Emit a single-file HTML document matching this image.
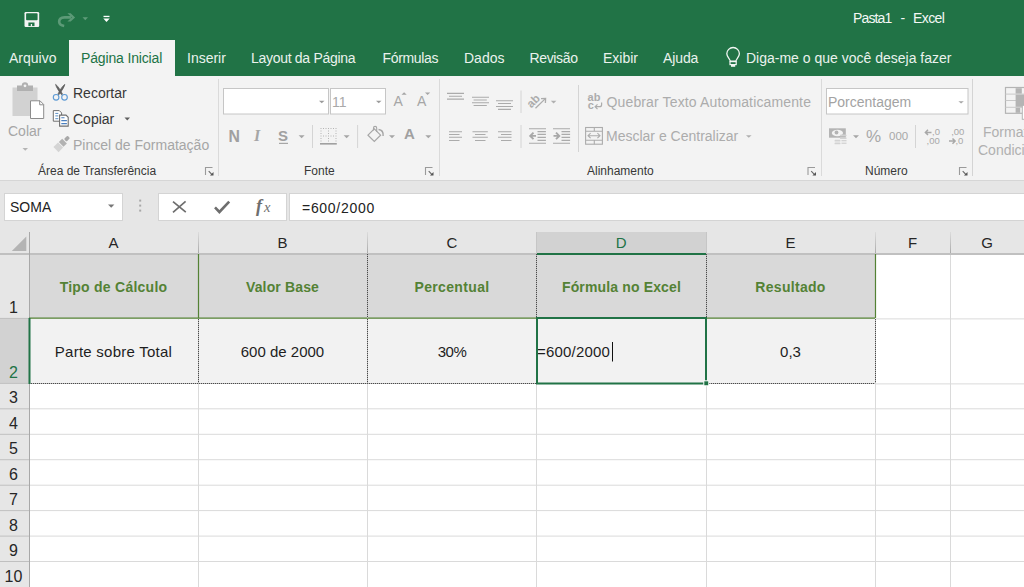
<!DOCTYPE html>
<html><head><meta charset="utf-8">
<style>
*{box-sizing:border-box;margin:0;padding:0}
html,body{width:1024px;height:587px;overflow:hidden;background:#fff;font-family:"Liberation Sans",sans-serif;}
.a{position:absolute;white-space:pre;line-height:1}
#title{position:absolute;left:0;top:0;width:1024px;height:76px;background:#217346}
.tab{position:absolute;top:50px;font-size:14px;color:#eaf2ed}
#acttab{position:absolute;left:69px;top:40px;width:106px;height:36px;background:#f3f3f3}
#ribbon{position:absolute;left:0;top:76px;width:1024px;height:105px;background:#f3f3f3;border-bottom:1px solid #d6d6d6}
.rt{position:absolute;font-size:14px;color:#383838;white-space:pre;line-height:1}
.dis{color:#a6a6a6}
.gl{position:absolute;font-size:12px;color:#383838;white-space:pre;line-height:1}
.sep{position:absolute;width:1px;background:#d4d4d4}
#fbar{position:absolute;left:0;top:181px;width:1024px;height:51px;background:#e6e6e6}
.box{position:absolute;background:#fff;border:1px solid #d4d4d4}
</style></head><body>
<div id="title">
<svg class="a" style="left:0;top:0" width="130" height="40" viewBox="0 0 130 40">
 <rect x="24.5" y="12.1" width="14.7" height="14.9" rx="1.2" fill="#f4f4f4"/>
 <rect x="26.1" y="13.3" width="11.5" height="7" rx=".8" fill="#217346"/>
 <rect x="28.4" y="22.5" width="6.1" height="3.6" fill="#217346"/>
 <rect x="30.8" y="24" width="1.3" height="2.1" fill="#f4f4f4"/>
 <path d="M71 17.4h-6.4c-4.2 0-5.6 2.2-5.4 4.6c.2 2 1.8 3.4 5 4" fill="none" stroke="#5c9a77" stroke-width="2.7"/>
 <path d="M67.4 13.2h3.3l4.4 4.2l-4.4 4.2h-3.3l4.4-4.2z" fill="#5c9a77"/>
 <path d="M82.5 17.2h5.5l-2.75 3z" fill="#5f9c7a"/>
 <rect x="103.5" y="15.8" width="6" height="1.3" fill="#fff"/>
 <path d="M103.3 18.4h6.4l-3.2 3.6z" fill="#fff"/>
</svg>
<span class="a" style="left:853px;top:11px;font-size:14px;color:#f4f8f5;letter-spacing:-.85px">Pasta1</span><span class="a" style="left:900.5px;top:11px;font-size:14px;color:#f4f8f5">-</span><span class="a" style="left:913px;top:11px;font-size:14px;color:#f4f8f5;letter-spacing:-.6px">Excel</span>
<span class="tab" style="left:9px">Arquivo</span>
<span class="tab" style="left:187px">Inserir</span>
<span class="tab" style="left:251px;letter-spacing:-.3px">Layout da Página</span>
<span class="tab" style="left:382.5px;letter-spacing:-.35px">Fórmulas</span>
<span class="tab" style="left:464px">Dados</span>
<span class="tab" style="left:529.5px;letter-spacing:-.35px">Revisão</span>
<span class="tab" style="left:603px">Exibir</span>
<span class="tab" style="left:663px;letter-spacing:-.1px">Ajuda</span>
<svg class="a" style="left:720px;top:44px" width="26" height="26" viewBox="720 44 26 26">
 <path d="M730.3 61.2c0-2-3.5-4.3-3.5-7.4a6.3 6.3 0 0 1 12.6 0c0 3.1-3.5 5.4-3.5 7.4z" fill="none" stroke="#f1f6f3" stroke-width="1.3"/>
 <rect x="730" y="61.6" width="6.2" height="3" fill="none" stroke="#f1f6f3" stroke-width="1.2"/>
 <rect x="731" y="65" width="4.2" height="1.8" fill="#f1f6f3"/>
</svg>
<span class="tab" style="left:746px">Diga-me o que você deseja fazer</span>
</div>
<div id="acttab"><span class="a" style="left:12px;top:11px;font-size:14px;color:#217346;letter-spacing:-.15px">Página Inicial</span></div>
<div id="ribbon"></div>
<svg class="a" style="left:0;top:76px" width="1024" height="105" viewBox="0 76 1024 105">
 <!-- clipboard group -->
 <rect x="12.5" y="87.5" width="25" height="28.5" fill="#d2d2d2"/>
 <path d="M17 85.5h4.8a3.2 3.2 0 0 1 6.4 0h4.8v5.5h-16z" fill="#b0b0b0"/>
 <circle cx="25" cy="85.8" r="1.4" fill="#f3f3f3"/>
 <path d="M30.5 100.8h9.5l3.7 3.7v14h-13.2z" fill="#fff" stroke="#8c8c8c" stroke-width="1"/>
 <path d="M39.7 100.8v4h4" fill="none" stroke="#8c8c8c" stroke-width="1"/>
 <path d="M22.5 148h5.5l-2.75 2.8z" fill="#b4b4b4"/>
 <path d="M55.6 84.4c.6 2.8 3 6.2 6 10.4l.9-.6c-2.2-4-3.8-7.6-6.9-9.8z" fill="#606060" stroke="#606060" stroke-width=".8"/>
 <path d="M64.8 84.4c-.6 2.8-3 6.2-6 10.4l-.9-.6c2.2-4 3.8-7.6 6.9-9.8z" fill="#606060" stroke="#606060" stroke-width=".8"/>
 <circle cx="56.1" cy="97.3" r="2.8" fill="none" stroke="#5d9ad4" stroke-width="1.15"/>
 <circle cx="64.5" cy="97.3" r="2.8" fill="none" stroke="#5d9ad4" stroke-width="1.15"/>
 <path d="M53.3 110.6h6l2.3 2.3v8.3h-8.3z" fill="#fff" stroke="#6e6e6e" stroke-width="1"/>
 <path d="M55.3 113.4h3M55.3 115.9h3M55.3 118.7h3" stroke="#5a8fc4" stroke-width="1"/>
 <path d="M59.6 115.1h6.4l2.2 2.2v8.8h-8.6z" fill="#fff" stroke="#6e6e6e" stroke-width="1.1"/>
 <path d="M61.3 117.8h3.2M61.3 120.6h5.6M61.3 123.6h5.6" stroke="#4a7fbf" stroke-width="1.1"/>
 <path d="M124.5 117.6h5.5l-2.75 2.8z" fill="#5e5e5e"/>
 <g transform="translate(62 143.6) rotate(-45)">
  <path d="M-8.5 -3.6h6.5v7.2h-6.5z" fill="#d4d4d4"/>
  <rect x="-1.2" y="-3.3" width="4.8" height="6.6" fill="#b2b2b2"/>
  <rect x="4.6" y="-1.8" width="5" height="3.6" rx="1" fill="#a8a8a8"/>
 </g>
 <path d="M218.5 79v97" stroke="#dadada" stroke-width="1"/>
 <path d="M205.5 175v-7.5h7" fill="none" stroke="#9a9a9a" stroke-width="1.1"/>
 <path d="M208.7 171.2l3.6 3.6" stroke="#666" stroke-width="1.1"/>
 <path d="M213.5 172v3.6h-3.6z" fill="#555"/>
 <!-- font group -->
 <rect x="223.5" y="88.5" width="105" height="25.5" fill="#fff" stroke="#c6c6c6"/>
 <rect x="330.5" y="88.5" width="55" height="25.5" fill="#fff" stroke="#c6c6c6"/>
 <path d="M319 100.8h5.5l-2.75 2.4z" fill="#9a9a9a"/>
 <path d="M376 100.8h5.5l-2.75 2.4z" fill="#9a9a9a"/>
 <path d="M401.5 94.8l2.6-2.6l2.6 2.6z" fill="#a6a6a6"/>
 <path d="M425 92.5h5.2l-2.6 2.6z" fill="#a6a6a6"/>
 <path d="M279 143.4h9" stroke="#a6a6a6" stroke-width="1.2"/>
 <path d="M298.6 135.2h6l-3 3z" fill="#a6a6a6"/>
 <path d="M312.5 125v23" stroke="#d4d4d4"/>
 <g fill="#b4b4b4">
  <path d="M320.5 128h1v1h-1zM323 128h1v1h-1zM325.5 128h1v1h-1zM328 128h1v1h-1zM330.5 128h1v1h-1zM333 128h1v1h-1zM335.5 128h1v1h-1z"/>
  <path d="M320.5 135.5h1v1h-1zM323 135.5h1v1h-1zM325.5 135.5h1v1h-1zM328 135.5h1v1h-1zM330.5 135.5h1v1h-1zM333 135.5h1v1h-1zM335.5 135.5h1v1h-1z"/>
  <path d="M320.5 130.5h1v1h-1zM320.5 133h1v1h-1zM320.5 138h1v1h-1zM320.5 140.5h1v1h-1z"/>
  <path d="M328 130.5h1v1h-1zM328 133h1v1h-1zM328 138h1v1h-1zM328 140.5h1v1h-1z"/>
  <path d="M335.5 130.5h1v1h-1zM335.5 133h1v1h-1zM335.5 138h1v1h-1zM335.5 140.5h1v1h-1z"/>
 </g>
 <rect x="320" y="143" width="16.8" height="1.6" fill="#a0a0a0"/>
 <path d="M343.6 135.2h6l-3 3z" fill="#a6a6a6"/>
 <path d="M357.6 125v23" stroke="#d4d4d4"/>
 <path d="M368 135.2l6.3-6.3l6.3 6.3l-6.3 6.3z" fill="none" stroke="#a6a6a6" stroke-width="1.2"/>
 <path d="M373.5 130.5v-2.5a1.6 1.6 0 0 1 3.2 0v4" fill="none" stroke="#a6a6a6" stroke-width="1.1"/>
 <path d="M378.5 129.5c3 .3 5 2.5 4.6 6.5" fill="none" stroke="#a6a6a6" stroke-width="1.4"/>
 <path d="M389 135.2h6l-3 3z" fill="#a6a6a6"/>
 <path d="M425.3 135.2h6l-3 3z" fill="#a6a6a6"/>
 <path d="M439.5 79v97" stroke="#dadada" stroke-width="1"/>
 <path d="M425.5 175v-7.5h7" fill="none" stroke="#9a9a9a" stroke-width="1.1"/>
 <path d="M428.7 171.2l3.6 3.6" stroke="#666" stroke-width="1.1"/>
 <path d="M433.5 172v3.6h-3.6z" fill="#555"/>
 <!-- alignment group -->
 <g stroke="#ababab" stroke-width="1.1">
  <path d="M447 93.4h17M449 96.3h13M447 99.1h17"/>
  <path d="M472 97.3h17M473.6 100h13.2M472 102.8h17M473.6 105.5h13.2"/>
  <path d="M496 100.8h17M498 103.5h13M496 106.5h17M498 109.4h13"/>
  <path d="M449 131.7h13M449 134.5h10.5M449 137.3h13M449 140.5h10.5"/>
  <path d="M472.5 131.7h15.3M475 134.5h10.5M472.5 137.3h15.3M475 140.5h10.5"/>
  <path d="M498 131.7h13.5M501 134.5h10.5M498 137.3h13.5M501 140.5h10.5"/>
  <path d="M529 128.8h17M537.5 131.6h8.4M537.5 134.4h8.4M537.5 137.4h8.4M537.5 140.4h8.4M529 143.2h17"/>
  <path d="M553 128.8h17M561.5 131.6h8.6M561.5 134.4h8.6M561.5 137.4h8.6M561.5 140.4h8.6M553 143.2h17"/>
 </g>
 <path d="M536 135.9h-5.5M533.5 132.6l-3.3 3.3l3.3 3.3" fill="none" stroke="#a8a8a8" stroke-width="1.9"/>
 <path d="M553.5 135.9h5.5M556 132.6l3.3 3.3l-3.3 3.3" fill="none" stroke="#a8a8a8" stroke-width="1.9"/>
 <path d="M521 90.5v22.5M521 125v23M578.5 85v67" stroke="#d4d4d4"/>
 <text transform="translate(536 103.8) rotate(-45)" font-family="Liberation Sans" font-size="11.5" font-weight="bold" fill="#acacac" text-anchor="middle">ab</text>
 <path d="M535.5 108.3l9.6-9.4" stroke="#acacac" stroke-width="1.3"/>
 <path d="M541 98.6l4.6-.2l-.2 4.6" fill="none" stroke="#acacac" stroke-width="1.3"/>
 <path d="M550.8 100.8h5.6l-2.8 2.6z" fill="#b0b0b0"/>
 <text x="587.6" y="101.3" font-family="Liberation Sans" font-size="11" font-weight="bold" fill="#acacac">ab</text>
 <text x="587.8" y="108.8" font-family="Liberation Sans" font-size="11" font-weight="bold" fill="#acacac">c</text>
 <path d="M601.6 102.5v2.2a2 2 0 0 1-2 2h-4.4M597.5 104.3l-2.4 2.4l2.4 2.4" fill="none" stroke="#acacac" stroke-width="1.2"/>
 <rect x="585.6" y="127.5" width="16.8" height="16.7" fill="none" stroke="#acacac" stroke-width="1.1"/>
 <path d="M585.6 131.2h16.8M585.6 140.3h16.8M594.3 127.5v3.7M594.3 140.3v3.9" stroke="#acacac" stroke-width="1.1"/>
 <path d="M588 135.7h12M590.6 133.2l-2.6 2.5l2.6 2.5M597.4 133.2l2.6 2.5l-2.6 2.5" fill="none" stroke="#acacac" stroke-width="1.1"/>
 <path d="M746 135.2h5.6l-2.8 2.6z" fill="#b0b0b0"/>
 <path d="M821.5 79v97" stroke="#dadada" stroke-width="1"/>
 <path d="M808.0 175v-7.5h7" fill="none" stroke="#9a9a9a" stroke-width="1.1"/>
 <path d="M811.2 171.2l3.6 3.6" stroke="#666" stroke-width="1.1"/>
 <path d="M816.0 172v3.6h-3.6z" fill="#555"/>
 <!-- number group -->
 <rect x="826.5" y="88.5" width="141.5" height="25.5" fill="#fff" stroke="#c6c6c6"/>
 <path d="M958.4 101.2h5.4l-2.7 2.4z" fill="#a6a6a6"/>
 <rect x="829" y="128.3" width="16.8" height="9.4" fill="#b4b4b4"/>
 <ellipse cx="837.4" cy="133" rx="5.6" ry="3.2" fill="#f3f3f3"/>
 <circle cx="836.5" cy="132.5" r="1.9" fill="#b4b4b4"/>
 <g fill="#d2d2d2">
  <rect x="840" y="134.5" width="6.6" height="1.8" rx=".9"/>
  <rect x="840" y="137.3" width="6.6" height="1.8" rx=".9"/>
  <rect x="834.5" y="139.8" width="6" height="1.8" rx=".9"/>
  <rect x="834.5" y="142.5" width="6" height="1.8" rx=".9"/>
  <rect x="841.5" y="140" width="5" height="1.3"/>
  <rect x="841.5" y="142.6" width="5" height="1.3"/>
 </g>
 <path d="M853 135.2h6l-3 3z" fill="#a6a6a6"/>
 <path d="M915.5 125v23M972.5 79v97" stroke="#d4d4d4"/>
 <text x="932" y="135.3" font-family="Liberation Sans" font-size="9.5" fill="#a8a8a8">,0</text>
 <text x="926.5" y="143.8" font-family="Liberation Sans" font-size="9.5" fill="#a8a8a8">,00</text>
 <path d="M931.5 132.4h-6M928 129.8l-2.6 2.6l2.6 2.6" fill="none" stroke="#a8a8a8" stroke-width="1.5"/>
 <text x="951.2" y="135.3" font-family="Liberation Sans" font-size="9.5" fill="#a8a8a8">,00</text>
 <text x="955.4" y="143.8" font-family="Liberation Sans" font-size="9.5" fill="#a8a8a8">,0</text>
 <path d="M949 141.1h6M952.5 138.5l2.6 2.6l-2.6 2.6" fill="none" stroke="#a8a8a8" stroke-width="1.5"/>
 <path d="M959.5 175v-7.5h7" fill="none" stroke="#9a9a9a" stroke-width="1.1"/>
 <path d="M962.7 171.2l3.6 3.6" stroke="#666" stroke-width="1.1"/>
 <path d="M967.5 172v3.6h-3.6z" fill="#555"/>
 <rect x="1005.5" y="87.5" width="22" height="25.8" fill="none" stroke="#b4b4b4" stroke-width="1.2"/>
 <path d="M1005.5 94.1h20M1005.5 100.5h20M1005.5 107.3h20" stroke="#c8c8c8" stroke-width="1"/>
 <rect x="1015.6" y="88.2" width="6.2" height="5.4" fill="#b4b4b4"/>
 <rect x="1015.6" y="94.6" width="9" height="12.2" fill="#b4b4b4"/>
 <rect x="1015.6" y="107.8" width="4.6" height="5" fill="#b4b4b4"/>
 <rect x="1022.3" y="105.3" width="4" height="14" fill="#fff" stroke="#b4b4b4" stroke-width="1"/>
</svg>
<span class="rt dis" style="left:8px;top:124px">Colar</span>
<span class="rt" style="left:73px;top:86px">Recortar</span>
<span class="rt" style="left:73px;top:112px">Copiar</span>
<span class="rt dis" style="left:73px;top:138px">Pincel de Formatação</span>
<span class="gl" style="left:38px;top:165px">Área de Transferência</span>
<span class="rt" style="left:332px;top:95px;color:#a9a9a9">11</span>
<span class="rt" style="left:393.5px;top:94px;color:#a6a6a6;font-size:14px">A</span>
<span class="rt" style="left:417px;top:94px;color:#a6a6a6;font-size:14px">A</span>
<span class="rt" style="left:228.5px;top:129px;color:#a0a0a0;font-size:15.8px;font-weight:bold">N</span>
<span class="a" style="left:254px;top:128px;color:#a6a6a6;font-size:16px;font-weight:bold;font-style:italic;font-family:'Liberation Serif',serif">I</span>
<span class="rt" style="left:278px;top:128px;color:#a0a0a0;font-size:15px;font-weight:bold">S</span>
<span class="rt" style="left:404px;top:126px;color:#a0a0a0;font-size:15px;font-weight:bold">A</span>
<span class="gl" style="left:304px;top:165px">Fonte</span>
<span class="rt dis" style="left:606.5px;top:95px;color:#acacac;letter-spacing:.14px">Quebrar Texto Automaticamente</span>
<span class="rt dis" style="left:606px;top:129px;color:#acacac">Mesclar e Centralizar</span>
<span class="gl" style="left:587px;top:165px">Alinhamento</span>
<span class="rt" style="left:828px;top:95px;color:#a3a3a3">Porcentagem</span>
<span class="a" style="left:866px;top:128px;font-size:17px;color:#a8a8a8">%</span>
<span class="a" style="left:889px;top:131px;font-size:11.5px;color:#a8a8a8">000</span>
<span class="gl" style="left:865px;top:165px">Número</span>
<span class="rt dis" style="left:983px;top:125px;color:#b0b0b0">Formatação</span>
<span class="rt dis" style="left:978px;top:143px;color:#b0b0b0">Condicional</span>
<div id="fbar"></div>
<div class="box" style="left:4px;top:193px;width:119px;height:28px"></div>
<span class="a" style="left:10px;top:200px;font-size:14px;color:#222">SOMA</span>
<div class="box" style="left:158px;top:193px;width:129px;height:28px"></div>
<div class="box" style="left:289px;top:193px;width:740px;height:28px"></div>
<span class="a" style="left:302px;top:201px;font-size:14px;color:#222;letter-spacing:.7px">=600/2000</span>
<svg class="a" style="left:0;top:181px" width="1024" height="406" viewBox="0 181 1024 406">
 <path d="M108 204.6h6.4l-3.2 3.2z" fill="#777"/>
 <g fill="#a8a8a8"><rect x="139.2" y="199.6" width="2" height="2"/><rect x="139.2" y="204.6" width="2" height="2"/><rect x="139.2" y="209.6" width="2" height="2"/></g>
 <path d="M173 201.6l12.8 10.6M185.6 201.4l-12.6 11" stroke="#6e6e6e" stroke-width="1.7"/>
 <path d="M215 207.4l4.4 4.6l9.8-10.4" fill="none" stroke="#6e6e6e" stroke-width="2.6" stroke-linejoin="miter"/>
 <text x="256" y="211.5" font-family="Liberation Serif" font-style="italic" font-weight="bold" font-size="18" fill="#6e6e6e">f</text>
 <text x="264" y="211.5" font-family="Liberation Serif" font-style="italic" font-size="14.5" fill="#6e6e6e">x</text>
</svg>
<div class="a" style="left:0;top:232px;width:1024px;height:22px;background:#e6e6e6"></div>
<div class="a" style="left:537px;top:232px;width:169px;height:22px;background:#d2d2d2"></div>
<div class="a" style="left:0;top:254px;width:29px;height:333px;background:#e6e6e6"></div>
<div class="a" style="left:0;top:318px;width:29px;height:65px;background:#d2d2d2"></div>
<div class="a" style="left:29px;top:254px;width:846px;height:64px;background:#d9d9d9"></div>
<div class="a" style="left:29px;top:318px;width:846px;height:65px;background:#f2f2f2"></div>
<div class="a" style="left:29px;top:235px;width:169px;text-align:center;font-size:15px;color:#262626">A</div>
<div class="a" style="left:198px;top:235px;width:169px;text-align:center;font-size:15px;color:#262626">B</div>
<div class="a" style="left:367px;top:235px;width:169.60000000000002px;text-align:center;font-size:15px;color:#262626">C</div>
<div class="a" style="left:536.6px;top:235px;width:169.39999999999998px;text-align:center;font-size:15px;color:#217346">D</div>
<div class="a" style="left:706px;top:235px;width:169px;text-align:center;font-size:15px;color:#262626">E</div>
<div class="a" style="left:875px;top:235px;width:75px;text-align:center;font-size:15px;color:#262626">F</div>
<div class="a" style="left:950px;top:235px;width:74px;text-align:center;font-size:15px;color:#262626">G</div>
<div class="a" style="left:0;top:300.0px;width:27px;text-align:center;font-size:16px;color:#262626">1</div>
<div class="a" style="left:0;top:365.0px;width:27px;text-align:center;font-size:16px;color:#217346">2</div>
<div class="a" style="left:0;top:390.4px;width:27px;text-align:center;font-size:16px;color:#262626">3</div>
<div class="a" style="left:0;top:415.9px;width:27px;text-align:center;font-size:16px;color:#262626">4</div>
<div class="a" style="left:0;top:441.3px;width:27px;text-align:center;font-size:16px;color:#262626">5</div>
<div class="a" style="left:0;top:466.8px;width:27px;text-align:center;font-size:16px;color:#262626">6</div>
<div class="a" style="left:0;top:492.2px;width:27px;text-align:center;font-size:16px;color:#262626">7</div>
<div class="a" style="left:0;top:517.7px;width:27px;text-align:center;font-size:16px;color:#262626">8</div>
<div class="a" style="left:0;top:543.1px;width:27px;text-align:center;font-size:16px;color:#262626">9</div>
<div class="a" style="left:0;top:568.6px;width:27px;text-align:center;font-size:16px;color:#262626">10</div>
<div class="a" style="left:29px;top:280px;width:169px;text-align:center;font-size:14px;font-weight:bold;color:#548235;letter-spacing:.25px">Tipo de Cálculo</div>
<div class="a" style="left:198px;top:280px;width:169px;text-align:center;font-size:14px;font-weight:bold;color:#548235;letter-spacing:.15px">Valor Base</div>
<div class="a" style="left:367px;top:280px;width:170px;text-align:center;font-size:14px;font-weight:bold;color:#548235;letter-spacing:.35px">Percentual</div>
<div class="a" style="left:537px;top:280px;width:169px;text-align:center;font-size:14px;font-weight:bold;color:#548235;letter-spacing:.15px">Fórmula no Excel</div>
<div class="a" style="left:706px;top:280px;width:169px;text-align:center;font-size:14px;font-weight:bold;color:#548235;letter-spacing:.3px">Resultado</div>
<div class="a" style="left:29px;top:344px;width:169px;text-align:center;font-size:15px;color:#1e1e1e;letter-spacing:.25px">Parte sobre Total</div>
<div class="a" style="left:198px;top:344px;width:169px;text-align:center;font-size:15px;color:#1e1e1e;letter-spacing:0px">600 de 2000</div>
<div class="a" style="left:367px;top:344px;width:170px;text-align:center;font-size:15px;color:#1e1e1e;letter-spacing:-.5px">30%</div>
<span class="a" style="left:537px;top:344px;font-size:15px;color:#1e1e1e;letter-spacing:.2px">=600/2000</span>
<div class="a" style="left:706px;top:344px;width:169px;text-align:center;font-size:15px;color:#1e1e1e;letter-spacing:0px">0,3</div>
<svg class="a" style="left:0;top:232px" width="1024" height="355" viewBox="0 232 1024 355">
 <!-- gridlines -->
 <g stroke="#dadada" stroke-width="1">
  <path d="M950.5 254v333M875.5 383v204M706.5 383v204M536.5 383v204M367.5 383v204M198.5 383v204"/>
  <path d="M875 318.9h149M875 383.9h149M29 408.8h995M29 434.3h995M29 459.7h995M29 485.2h995M29 510.6h995M29 536.1h995M29 561.5h995"/>
 </g>
 <!-- header separators -->
 <g stroke="#c0c0c0" stroke-width="1">

  <path d="M0 408.8h29M0 434.3h29M0 459.7h29M0 485.2h29M0 510.6h29M0 536.1h29M0 561.5h29M0 318.4h29M0 383.4h29"/>
 </g>
 <defs><linearGradient id="hg" x1="0" y1="0" x2="0" y2="1"><stop offset="0" stop-color="#dcdcdc"/><stop offset="1" stop-color="#a8a8a8"/></linearGradient></defs>
 <g fill="url(#hg)"><rect x="198" y="232" width="1" height="22"/><rect x="367" y="232" width="1" height="22"/><rect x="875" y="232" width="1" height="22"/><rect x="950" y="232" width="1" height="22"/></g>
 <path d="M536.5 232v22M706.5 232v22" stroke="#c6c6c6"/>
 <path d="M0 254h1024" stroke="#c0c0c0" stroke-width="2"/>
 <path d="M29.5 232v355" stroke="#a8a8a8" stroke-width="1"/>
 <path d="M537 254h169" stroke="#217346" stroke-width="2"/>
 <path d="M26.3 236.5v14.5h-14.5z" fill="#b4b4b4"/>
 <!-- table borders -->
 <g stroke="#548235" stroke-width="1.2">
  <path d="M29 318.2h846M198.5 254v64M875.5 254v64"/>
 </g>
 <g stroke="#bdbdbd" stroke-width="1">
  <path d="M367.5 255v63M536.5 255v63M706.5 255v63"/>
  <path d="M198.5 319v64M367.5 319v64M875.5 319v64"/>
  <path d="M29 383.5h846"/>
 </g>
 <g stroke="#4a4a4a" stroke-width="1" stroke-dasharray="1 1">
  <path d="M367.5 254v64M536.5 254v64M706.5 254v64"/>
  <path d="M198.5 319v64M367.5 319v64M875.5 319v64"/>
  <path d="M29 383.5h846"/>
 </g>
 <path d="M29.5 318v66" stroke="#217346" stroke-width="2"/>
 <!-- selection -->
 <rect x="537" y="318" width="169" height="65.5" fill="none" stroke="#217346" stroke-width="2"/>
 <rect x="703.8" y="380.8" width="5" height="5" fill="#217346" stroke="#fff" stroke-width="1"/>
 <path d="M612.5 342v19.5" stroke="#111" stroke-width="1"/>
</svg>
</body></html>
